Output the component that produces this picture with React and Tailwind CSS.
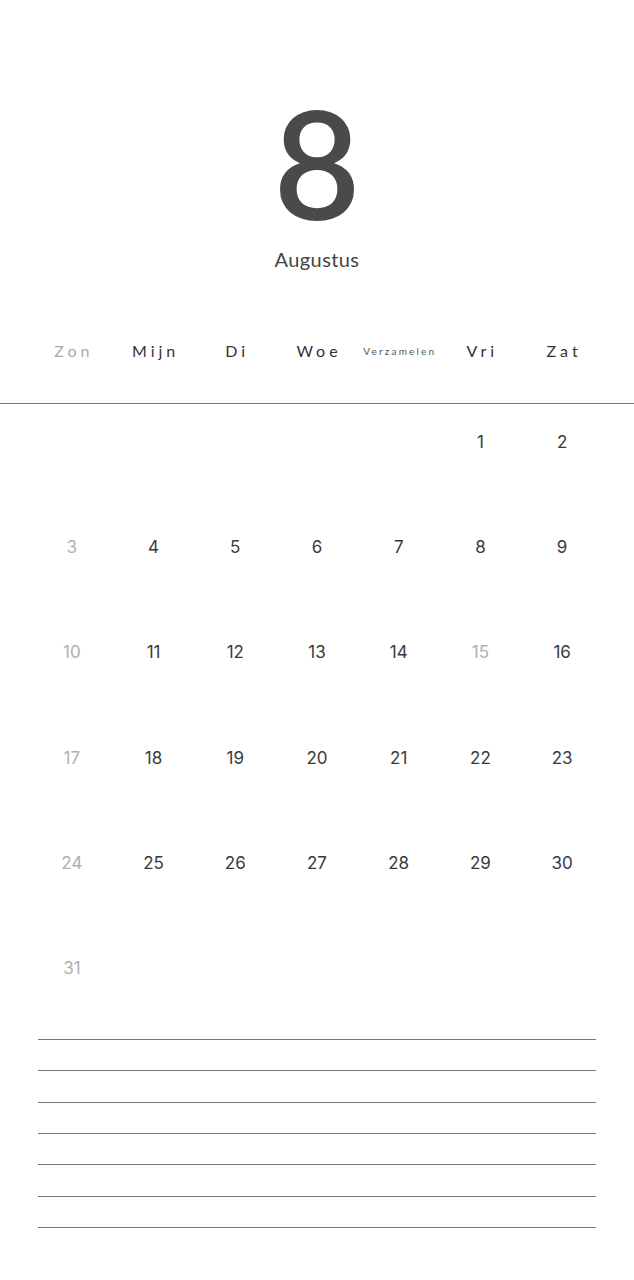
const days = ['Zon', 'Mijn', 'Di', 'Woe', 'Verzamelen', 'Vri', 'Zat']

// august starts on friday (index 5)
const cells = [...Array(5).fill(null), ...Array.from({ length: 31 }, (_, i) => i + 1)]
const rows = []
for (let i = 0; i < cells.length; i += 7) rows.push(cells.slice(i, i + 7))

const muted = d => d === 15

export default function App() {
  return (
    <div className="w-[634px] h-[1280px] bg-white text-[#444] font-['Lato',sans-serif]">
      {/* Month header */}
      <div className="flex flex-col items-center pt-[87px]">
        <div className="text-[150px] leading-[150px] text-[#4a4a4a] font-semibold">8</div>
        <div className="mt-[9px] text-[20px] leading-[26px] text-[#444] tracking-[0.02em]">Augustus</div>
      </div>

      {/* Weekdays */}
      <div className="mt-[64px] px-[31px] grid grid-cols-7 h-[30px] items-center">
        {days.map((d, i) => (
          <div
            key={d}
            className={
              'text-center ' +
              (d === 'Verzamelen'
                ? 'text-[10px] tracking-[0.22em] pl-[0.22em] text-[#555]'
                : 'text-[16px] tracking-[0.25em] pl-[0.25em] ' + (i === 0 ? 'text-[#aaa]' : 'text-[#333]'))
            }
          >
            {d}
          </div>
        ))}
      </div>
      <div className="mt-[37px] border-t border-[#777]" />

      {/* Days */}
      <div className="px-[31px] pt-[26px] font-['Inter',sans-serif]">
        {rows.map((row, r) => (
          <div key={r} className="grid grid-cols-7 h-[105.2px]">
            {row.map((d, c) => (
              <div
                key={c}
                className={
                  'text-center text-[17px] leading-[24px] ' +
                  (c === 0 || muted(d) ? 'text-[#b0b0b0]' : 'text-[#3a3a3a]')
                }
              >
                {d}
              </div>
            ))}
          </div>
        ))}
      </div>

      {/* Notes lines */}
      <div className="mx-[38px] -mt-[22px] flex flex-col gap-[30.3px]">
        {Array.from({ length: 7 }).map((_, i) => (
          <div key={i} className="border-t border-[#777]" />
        ))}
      </div>
    </div>
  )
}
